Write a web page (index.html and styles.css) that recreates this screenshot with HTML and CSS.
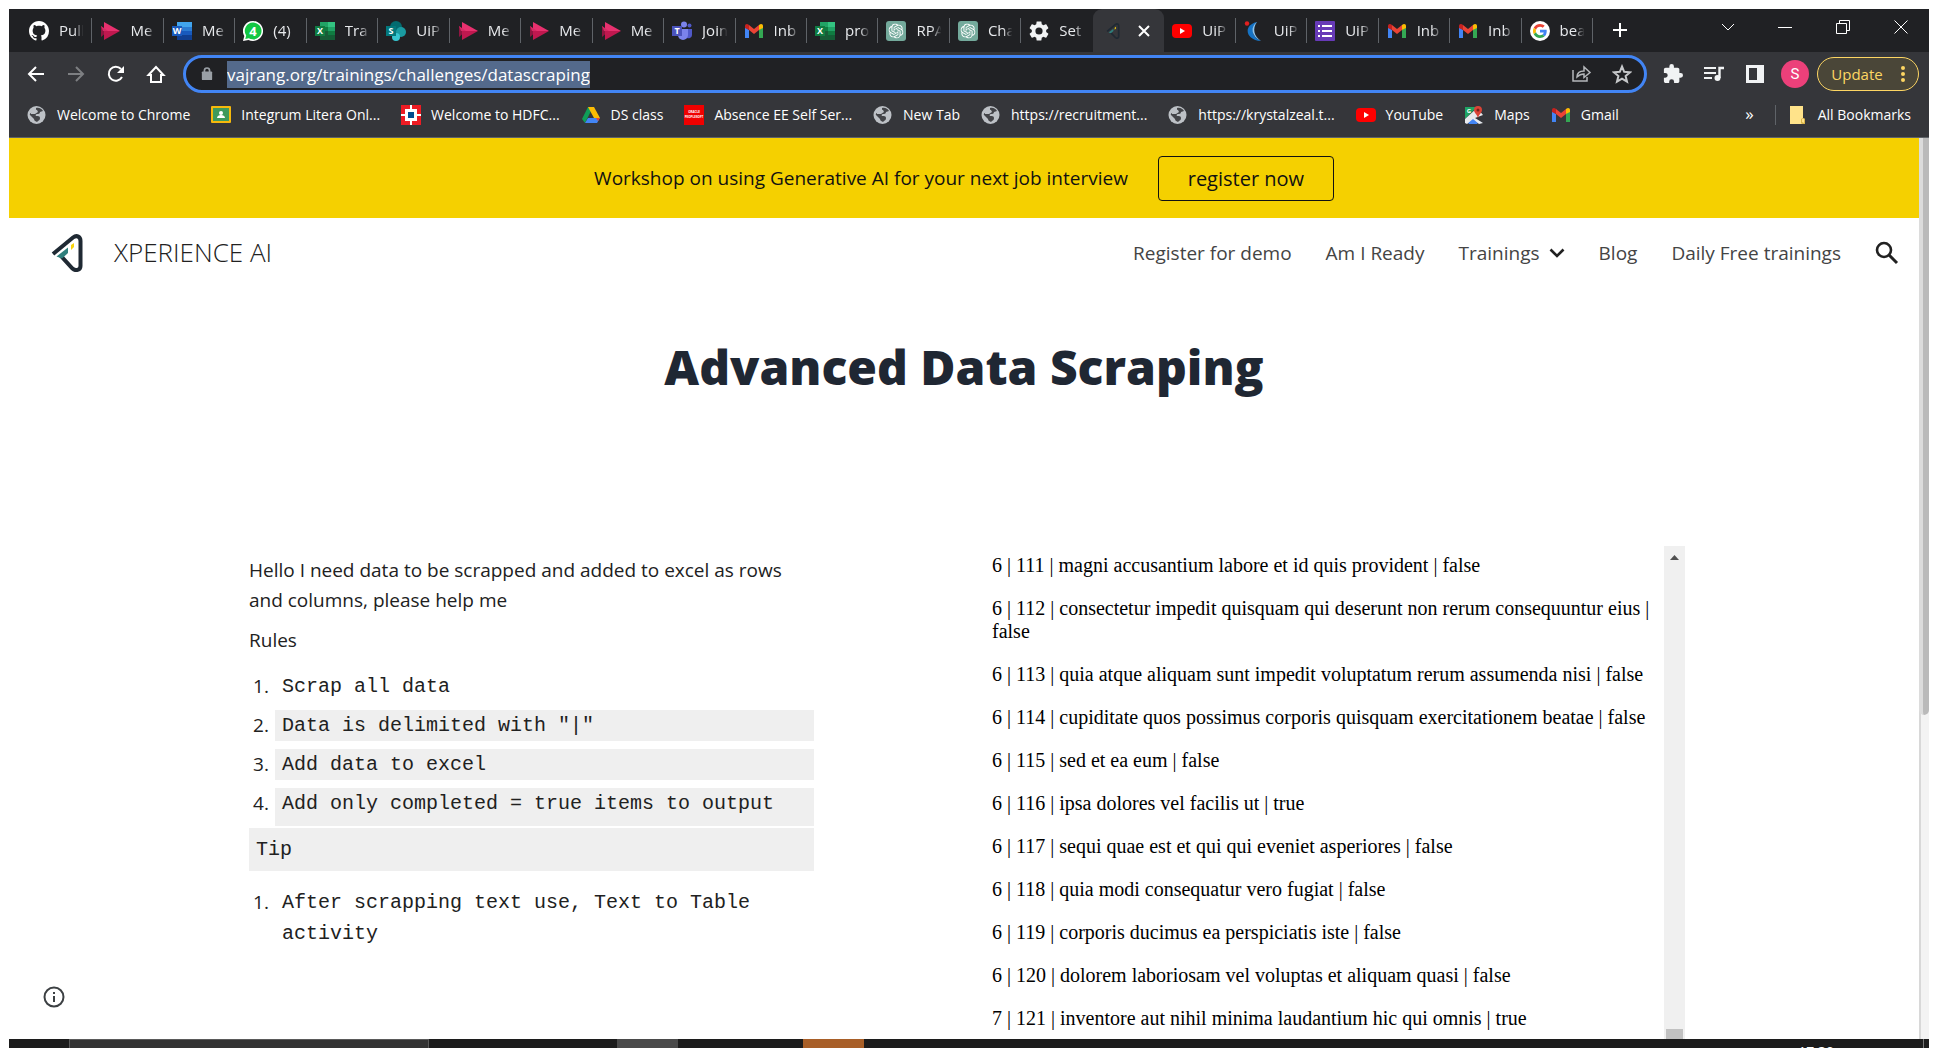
FILE: index.html
```html
<!DOCTYPE html>
<html lang="en">
<head>
<meta charset="utf-8">
<title>Advanced Data Scraping</title>
<link rel="stylesheet" href="styles.css">
</head>
<body>
<svg class="sprite" aria-hidden="true">
  <symbol id="github" viewBox="0 0 16 16"><path fill="#fff" d="M8 0C3.58 0 0 3.58 0 8c0 3.54 2.29 6.53 5.47 7.59.4.07.55-.17.55-.38 0-.19-.01-.82-.01-1.49-2.01.37-2.53-.49-2.69-.94-.09-.23-.48-.94-.82-1.13-.28-.15-.68-.52-.01-.53.63-.01 1.08.58 1.23.82.72 1.21 1.87.87 2.33.66.07-.52.28-.87.51-1.07-1.78-.2-3.64-.89-3.64-3.95 0-.87.31-1.59.82-2.15-.08-.2-.36-1.02.08-2.12 0 0 .67-.21 2.2.82.64-.18 1.32-.27 2-.27.68 0 1.36.09 2 .27 1.53-1.04 2.2-.82 2.2-.82.44 1.1.16 1.92.08 2.12.51.56.82 1.27.82 2.15 0 3.07-1.87 3.75-3.65 3.95.29.25.54.73.54 1.48 0 1.07-.01 1.93-.01 2.2 0 .21.15.46.55.38A8.01 8.01 0 0016 8c0-4.42-3.58-8-8-8z"/></symbol>
  <symbol id="stream" viewBox="0 0 20 20"><path fill="#8f1540" d="M1 5l7 5-7 6z"/><path fill="#e8316f" d="M4 1l16 9H4z"/><path fill="#c0184f" d="M4 19l16-9H4z"/><path fill="#d62b64" d="M1 5l7 5H3z"/></symbol>
  <symbol id="word" viewBox="0 0 20 20"><path fill="#41a5ee" d="M5 1h15v5H5z"/><path fill="#2b7cd3" d="M5 6h15v4H5z"/><path fill="#185abd" d="M5 10h15v4H5z"/><path fill="#103f91" d="M5 14h15v5H5z"/><path fill="#185abd" d="M0 5h10v10H0z"/><text x="5" y="13" class="glyph">W</text></symbol>
  <symbol id="whatsapp" viewBox="0 0 20 20"><path fill="#fff" d="M10 0a10 10 0 11-4.500 18.900L0 20l1.300-5A10 10 0 0110 0z"/><path fill="#12c743" d="M10 1.600a8.400 8.400 0 11-4.200 15.600l-3.500.8.900-3.400A8.400 8.400 0 0110 1.600z"/><text x="10" y="14.500" class="glyph glyph-large">4</text></symbol>
  <symbol id="excel" viewBox="0 0 20 20"><path fill="#21a366" d="M5 1h8v5H5z"/><path fill="#33c481" d="M13 1h7v5h-7z"/><path fill="#107c41" d="M5 6h15v8H5z"/><path fill="#185c37" d="M5 10h8v9H5z"/><path fill="#21a366" d="M13 6h7v4h-7z"/><path fill="#135e36" d="M13 14h7v5h-7z"/><path fill="#107c41" d="M0 5h10v10H0z"/><text x="5" y="13" class="glyph">X</text></symbol>
  <symbol id="sharepoint" viewBox="0 0 20 20"><circle cx="10" cy="6" r="6" fill="#036c70"/><circle cx="15" cy="11" r="5" fill="#1a9ba1"/><circle cx="10" cy="16" r="4" fill="#37c6d0"/><path fill="#03787c" d="M0 5h10v10H0z"/><text x="5" y="13" class="glyph">S</text></symbol>
  <symbol id="teams" viewBox="0 0 20 20"><circle cx="12" cy="3.500" r="3" fill="#7b83eb"/><circle cx="17.500" cy="4.500" r="2" fill="#5059c9"/><path fill="#5059c9" d="M14 8h6v6a3.500 3.500 0 01-5 3z"/><path fill="#7b83eb" d="M6 8h10v6a5 5 0 01-10 0z"/><path fill="#4b53bc" d="M0 5h10v10H0z"/><text x="5" y="13" class="glyph">T</text></symbol>
  <symbol id="gmail" viewBox="0 0 20 20"><path fill="#4285f4" d="M1 17h4V9L1 6z"/><path fill="#34a853" d="M15 17h4V6l-4 3z"/><path fill="#ea4335" d="M5 4l5 4 5-4v5l-5 4-5-4z"/><path fill="#c5221f" d="M1 7V5c0-2 2-3 4-1v5z"/><path fill="#fbbc04" d="M19 7V5c0-2-2-3-4-1v5z"/></symbol>
  <symbol id="gpt" viewBox="0 0 20 20"><rect width="20" height="20" rx="3" fill="#74aa9c"/><svg x="2.500" y="2.500" width="15" height="15" viewBox="0 0 24 24"><path fill="#fff" d="M22.2819 9.8211a5.9847 5.9847 0 0 0-.5157-4.9108 6.0462 6.0462 0 0 0-6.5098-2.9A6.0651 6.0651 0 0 0 4.9807 4.1818a5.9847 5.9847 0 0 0-3.9977 2.9 6.0462 6.0462 0 0 0 .7427 7.0966 5.98 5.98 0 0 0 .511 4.9107 6.051 6.051 0 0 0 6.5146 2.9001A5.9847 5.9847 0 0 0 13.2599 24a6.0557 6.0557 0 0 0 5.7718-4.2058 5.9894 5.9894 0 0 0 3.9977-2.9001 6.0557 6.0557 0 0 0-.7475-7.0729zm-9.022 12.6081a4.4755 4.4755 0 0 1-2.8764-1.0408l.1419-.0804 4.7783-2.7582a.7948.7948 0 0 0 .3927-.6813v-6.7369l2.02 1.1686a.071.071 0 0 1 .038.052v5.5826a4.504 4.504 0 0 1-4.4945 4.4944zm-9.6607-4.1254a4.4708 4.4708 0 0 1-.5346-3.0137l.142.0852 4.783 2.7582a.7712.7712 0 0 0 .7806 0l5.8428-3.3685v2.3324a.0804.0804 0 0 1-.0332.0615L9.74 19.9502a4.4992 4.4992 0 0 1-6.1408-1.6464zM2.3408 7.8956a4.485 4.485 0 0 1 2.3655-1.9728V11.6a.7664.7664 0 0 0 .3879.6765l5.8144 3.3543-2.0201 1.1685a.0757.0757 0 0 1-.071 0l-4.8303-2.7865A4.504 4.504 0 0 1 2.3408 7.872zm16.5963 3.8558L13.1038 8.364 15.1192 7.2a.0757.0757 0 0 1 .071 0l4.8303 2.7913a4.4944 4.4944 0 0 1-.6765 8.1042v-5.6772a.79.79 0 0 0-.407-.667zm2.0107-3.0231l-.142-.0852-4.7735-2.7818a.7759.7759 0 0 0-.7854 0L9.409 9.2297V6.8974a.0662.0662 0 0 1 .0284-.0615l4.8303-2.7866a4.4992 4.4992 0 0 1 6.6802 4.66zM8.3065 12.863l-2.02-1.1638a.0804.0804 0 0 1-.038-.0567V6.0742a4.4992 4.4992 0 0 1 7.3757-3.4537l-.142.0805L8.704 5.459a.7948.7948 0 0 0-.3927.6813zm1.0976-2.3654l2.602-1.4998 2.6069 1.4998v2.9994l-2.5974 1.4997-2.6067-1.4997Z"/></svg></symbol>
  <symbol id="gear" viewBox="2 2 20 20"><path fill="#f1f3f4" d="M19.140 12.940c.04-.3.060-.610.060-.940s-.020-.640-.070-.940l2.030-1.580c.180-.140.230-.410.120-.610l-1.920-3.320c-.120-.220-.370-.290-.590-.220l-2.390.960c-.5-.380-1.030-.7-1.620-.940l-.360-2.540c-.040-.240-.240-.410-.480-.410h-3.840c-.240 0-.430.170-.470.410l-.360 2.540c-.590.240-1.130.570-1.620.940l-2.390-.960c-.220-.080-.470 0-.590.220L2.740 8.870c-.120.210-.080.470.120.610l2.030 1.580c-.050.3-.090.630-.090.940s.020.640.070.940l-2.030 1.580c-.180.140-.230.410-.120.610l1.920 3.320c.120.220.370.290.590.220l2.390-.960c.5.380 1.030.7 1.620.940l.360 2.540c.050.240.240.410.480.410h3.840c.240 0 .440-.170.470-.410l.360-2.540c.590-.240 1.130-.560 1.620-.940l2.390.960c.220.080.470 0 .590-.220l1.920-3.320c.120-.220.070-.470-.120-.610l-2.010-1.580zM12 15.600A3.600 3.600 0 1112 8.400a3.600 3.600 0 010 7.200z"/></symbol>
  <symbol id="xp" viewBox="0 0 32 38"><path fill="none" stroke="#1f2933" stroke-width="4" d="M2 20L22 3.500C26 .5 29.500 3 29.500 7v25c0 4-5 5.500-8 2.500L9 21"/><path fill="#2f7f7c" d="M5.500 22.500L17 13.500V19l-6 5.500z"/><path fill="#f9d40b" d="M20 11l3-2v4l-3 3z"/></symbol>
  <symbol id="youtube" viewBox="0 0 20 20"><rect y="3" width="20" height="14" rx="4" fill="#f00"/><path fill="#fff" d="M8 7l5 3-5 3z"/></symbol>
  <symbol id="krystal" viewBox="0 0 20 20"><path fill="#1673c4" d="M13 1C-1 4 1 19 17 20 8 16 6 8 13 1z"/><path fill="#8ec5ee" d="M13 1C6 6 7 15 17 20 10 15 8 8 13 1z"/><circle cx="3" cy="2.500" r="2.200" fill="#e02020"/></symbol>
  <symbol id="forms" viewBox="0 0 20 20"><rect width="20" height="20" rx="1" fill="#673ab7"/><path fill="#fff" d="M3 4h2v2H3zM3 9h2v2H3zM3 14h2v2H3zM7 4h10v2H7zM7 9h10v2H7zM7 14h10v2H7z"/></symbol>
  <symbol id="google" viewBox="0 0 20 20"><circle cx="10" cy="10" r="10" fill="#fff"/><svg x="3" y="3" width="14" height="14" viewBox="0 0 48 48"><path fill="#EA4335" d="M24 9.500c3.540 0 6.710 1.220 9.210 3.600l6.850-6.850C35.900 2.380 30.470 0 24 0 14.620 0 6.510 5.380 2.560 13.220l7.980 6.190C12.430 13.720 17.740 9.500 24 9.500z"/><path fill="#4285F4" d="M46.980 24.550c0-1.570-.150-3.090-.380-4.550H24v9.020h12.940c-.580 2.960-2.260 5.480-4.780 7.180l7.730 6c4.510-4.180 7.090-10.360 7.090-17.650z"/><path fill="#FBBC05" d="M10.530 28.590c-.480-1.450-.760-2.990-.760-4.590s.270-3.140.760-4.590l-7.980-6.190C.92 16.460 0 20.120 0 24c0 3.880.92 7.540 2.560 10.780l7.970-6.190z"/><path fill="#34A853" d="M24 48c6.480 0 11.930-2.130 15.890-5.810l-7.730-6c-2.150 1.450-4.920 2.300-8.160 2.300-6.260 0-11.570-4.220-13.470-9.910l-7.980 6.190C6.510 42.620 14.620 48 24 48z"/></svg></symbol>
  <symbol id="globe" viewBox="0 0 20 20"><circle cx="9.500" cy="10" r="9" fill="#bdc1c6"/><path fill="#35363a" d="M9 3c3-1 6 1 7 3l-3 1c0 2-2 2-3 2s-2 1-1 2c2 0 4 0 4 2s-1 2-2 3l-1 1c-1-1-3-1-3-3l-4-4C2.500 10 3 8 4 8l5-1z" opacity=".9"/><path fill="#bdc1c6" d="M4 8c2-3 4-4 6-3l1 2-3 2H4z"/></symbol>
  <symbol id="classroom" viewBox="0 0 20 20"><rect y="1" width="20" height="17" rx="1" fill="#f6b90c"/><rect x="2" y="3" width="16" height="13" fill="#3f9a5b"/><circle cx="10" cy="8" r="2" fill="#fff"/><path fill="#fff" d="M6 13c0-4 8-4 8 0z"/></symbol>
  <symbol id="hdfc" viewBox="0 0 20 20"><path fill="#ed1c24" d="M0 0h20v20H0z"/><path fill="#fff" d="M4 4h12v12H4zM9 0h2v4H9zM9 16h2v4H9zM0 9h4v2H0zM16 9h4v2h-4z"/><path fill="#004c8f" d="M7 7h6v6H7z"/></symbol>
  <symbol id="drive" viewBox="0 0 20 20"><path fill="#0f9d58" d="M1 14L7 2h5L4 18z"/><path fill="#fbbc04" d="M7 2h6l6 11h-6z"/><path fill="#4285f4" d="M7 13h12l-3 5H4z"/><path fill="#ea4335" d="M15 13h4l-2 3z"/></symbol>
  <symbol id="oracle" viewBox="0 0 20 20"><path fill="#f00000" d="M0 0h20v20H0z"/><text x="10" y="8" class="glyph glyph-tiny">ORACLE</text><text x="10" y="13" class="glyph glyph-tiny">PEOPLESOFT</text></symbol>
  <symbol id="maps" viewBox="0 0 20 20"><path fill="#1fa463" d="M1 2h12L1 14z"/><path fill="#4285f4" d="M9 12l9 6H3z"/><path fill="#e8eaed" d="M1 14L13 3l6 7-8 3 8 5-4 1-6-5-6 5-2-1z"/><path fill="#4285f4" d="M4 19l5-4 5 4z"/><path fill="#db4437" d="M14 1a4 4 0 014 4c0 3-3 4-4 8-1-4-4-5-4-8a4 4 0 014-4z"/><circle cx="14" cy="5" r="1.500" fill="#7b231b"/><text x="5" y="8" class="glyph glyph-small">G</text></symbol>
  <symbol id="folder" viewBox="0 0 20 20"><path fill="#ffe38a" d="M2 1h13v12l2 1v5H2z"/><path fill="#d9b44a" d="M13 18v-4l2-1 2 1v5h-3z"/><path fill="#ffe38a" d="M14 17v-3h2v4z"/></symbol>
</svg>

<div class="browser">
  <div class="tabstrip">
    <div class="tabs">
      <a class="tab" href="#"><svg class="fav"><use href="#github"/></svg><span>Pull</span></a>
      <a class="tab" href="#"><svg class="fav"><use href="#stream"/></svg><span>Me</span></a>
      <a class="tab" href="#"><svg class="fav"><use href="#word"/></svg><span>Me</span></a>
      <a class="tab" href="#"><svg class="fav"><use href="#whatsapp"/></svg><span>(4)</span></a>
      <a class="tab" href="#"><svg class="fav"><use href="#excel"/></svg><span>Tra</span></a>
      <a class="tab" href="#"><svg class="fav"><use href="#sharepoint"/></svg><span>UiP</span></a>
      <a class="tab" href="#"><svg class="fav"><use href="#stream"/></svg><span>Me</span></a>
      <a class="tab" href="#"><svg class="fav"><use href="#stream"/></svg><span>Me</span></a>
      <a class="tab" href="#"><svg class="fav"><use href="#stream"/></svg><span>Me</span></a>
      <a class="tab" href="#"><svg class="fav"><use href="#teams"/></svg><span>Join</span></a>
      <a class="tab" href="#"><svg class="fav"><use href="#gmail"/></svg><span>Inb</span></a>
      <a class="tab" href="#"><svg class="fav"><use href="#excel"/></svg><span>pro</span></a>
      <a class="tab" href="#"><svg class="fav"><use href="#gpt"/></svg><span>RPA</span></a>
      <a class="tab" href="#"><svg class="fav"><use href="#gpt"/></svg><span>Cha</span></a>
      <a class="tab no-line" href="#"><svg class="fav"><use href="#gear"/></svg><span>Set</span></a>
      <div class="tab active"><svg class="fav mark"><use href="#xp"/></svg><button class="tab-close" aria-label="Close tab"><svg width="12" height="12" viewBox="0 0 12 12"><path d="M1 1l10 10M11 1L1 11" stroke="#fff" stroke-width="2"/></svg></button></div>
      <a class="tab" href="#"><svg class="fav"><use href="#youtube"/></svg><span>UiP</span></a>
      <a class="tab" href="#"><svg class="fav"><use href="#krystal"/></svg><span>UiP</span></a>
      <a class="tab" href="#"><svg class="fav"><use href="#forms"/></svg><span>UiP</span></a>
      <a class="tab" href="#"><svg class="fav"><use href="#gmail"/></svg><span>Inb</span></a>
      <a class="tab" href="#"><svg class="fav"><use href="#gmail"/></svg><span>Inb</span></a>
      <a class="tab" href="#"><svg class="fav"><use href="#google"/></svg><span>bea</span></a>
    </div>
    <div class="window-controls">
      <button class="new-tab" aria-label="New tab"><svg width="16" height="16" viewBox="0 0 16 16"><path d="M8 1v14M1 8h14" stroke="#fff" stroke-width="2"/></svg></button>
      <button aria-label="Search tabs"><svg width="14" height="14" viewBox="0 0 14 14"><path d="M1 4l6 6 6-6"/></svg></button>
      <button aria-label="Minimize"><svg width="14" height="14" viewBox="0 0 14 14"><path d="M0 7.500h14"/></svg></button>
      <button aria-label="Restore"><svg width="14" height="14" viewBox="0 0 14 14"><path d="M.5 3.500h10v10H.5zM3.500 3V.5h10v10h-3"/></svg></button>
      <button aria-label="Close"><svg width="14" height="14" viewBox="0 0 14 14"><path d="M.5.500l13 13M13.500.500l-13 13"/></svg></button>
    </div>
  </div>

  <div class="toolbar">
    <button class="tool" aria-label="Back"><svg width="20" height="20" viewBox="0 0 20 20"><path d="M18 10H3M10 3l-7 7 7 7" fill="none" stroke="#fff" stroke-width="2"/></svg></button>
    <button class="tool" aria-label="Forward"><svg width="20" height="20" viewBox="0 0 20 20"><path d="M2 10h15M10 3l7 7-7 7" fill="none" stroke="#7d7f82" stroke-width="2"/></svg></button>
    <button class="tool" aria-label="Reload"><svg width="20" height="20" viewBox="0 0 20 20"><path d="M16 13a7 7 0 11-1-8" fill="none" stroke="#fff" stroke-width="2"/><path d="M18 2v7h-7z" fill="#fff"/></svg></button>
    <button class="tool" aria-label="Home"><svg width="20" height="20" viewBox="0 0 20 20"><path d="M2.500 11L10 3l7.500 8H15v7H5v-7z" fill="none" stroke="#fff" stroke-width="2"/></svg></button>
    <div class="omnibox">
      <svg class="lock" width="12" height="16" viewBox="0 0 14 16"><rect x="1" y="5" width="12" height="10" rx="1" fill="#9aa0a6"/><path d="M4 6V4a3 3 0 016 0v2" fill="none" stroke="#9aa0a6" stroke-width="2"/></svg>
      <input class="url" aria-label="Address" value="vajrang.org/trainings/challenges/datascraping">
      <button class="omni-tool" aria-label="Share"><svg width="20" height="20" viewBox="0 0 20 20"><path d="M1 6v11h14v-4M5 13c0-4 3-6 7-6V3l6 5.500-6 5V10c-3 0-5 1-7 3z" fill="none" stroke="#b4b7ba" stroke-width="1.500"/></svg></button>
      <button class="omni-tool" aria-label="Bookmark"><svg width="20" height="20" viewBox="0 0 20 20"><path d="M10 2.500l2.200 5.300 5.800.5-4.400 3.800 1.400 5.600-5-3-5 3 1.400-5.600L2 8.300l5.800-.5z" fill="none" stroke="#c6c8ca" stroke-width="2"/></svg></button>
    </div>
    <button class="tool" aria-label="Extensions"><svg width="20" height="20" viewBox="1 1 22 22"><path fill="#f1f3f4" d="M20.500 11H19V7c0-1.100-.9-2-2-2h-4V3.500a2.500 2.500 0 00-5 0V5H4c-1.100 0-2 .9-2 2v3.800h1.500a2.700 2.700 0 010 5.400H2V20c0 1.100.9 2 2 2h3.800v-1.500a2.700 2.700 0 015.400 0V22H17c1.100 0 2-.9 2-2v-4h1.500a2.500 2.500 0 000-5z"/></svg></button>
    <button class="tool" aria-label="Media controls"><svg width="22" height="20" viewBox="0 0 22 20"><path d="M1 4h12M1 9h12M1 14h8" stroke="#f1f3f4" stroke-width="2"/><circle cx="14.500" cy="14" r="3" fill="#f1f3f4"/><path d="M16.500 14V4H21" fill="none" stroke="#f1f3f4" stroke-width="2.400"/></svg></button>
    <button class="tool" aria-label="Side panel"><svg width="18" height="18" viewBox="0 0 18 18"><path fill="#f1f3f4" fill-rule="evenodd" d="M0 0h18v18H0zM3 3v12h8V3z"/></svg></button>
    <button class="avatar">S</button>
    <button class="update">Update<svg width="4" height="16" viewBox="0 0 4 16"><g fill="#fdd663"><circle cx="2" cy="2" r="2"/><circle cx="2" cy="8" r="2"/><circle cx="2" cy="14" r="2"/></g></svg></button>
  </div>

  <div class="bookmarks">
    <a href="#"><svg class="fav"><use href="#globe"/></svg>Welcome to Chrome</a>
    <a href="#"><svg class="fav"><use href="#classroom"/></svg>Integrum Litera Onl...</a>
    <a href="#"><svg class="fav"><use href="#hdfc"/></svg>Welcome to HDFC...</a>
    <a href="#"><svg class="fav"><use href="#drive"/></svg>DS class</a>
    <a href="#"><svg class="fav"><use href="#oracle"/></svg>Absence EE Self Ser...</a>
    <a href="#"><svg class="fav"><use href="#globe"/></svg>New Tab</a>
    <a href="#"><svg class="fav"><use href="#globe"/></svg>https://recruitment...</a>
    <a href="#"><svg class="fav"><use href="#globe"/></svg>https://krystalzeal.t...</a>
    <a href="#"><svg class="fav"><use href="#youtube"/></svg>YouTube</a>
    <a href="#"><svg class="fav"><use href="#maps"/></svg>Maps</a>
    <a href="#"><svg class="fav"><use href="#gmail"/></svg>Gmail</a>
    <button class="more">»</button>
    <a class="all" href="#"><svg class="fav"><use href="#folder"/></svg>All Bookmarks</a>
  </div>

  <div class="viewport">
    <div class="page">
      <div class="banner">
        <span>Workshop on using Generative AI for your next job interview</span>
        <a class="register" href="#">register now</a>
      </div>
      <header class="site-header">
        <svg class="logo" width="32" height="38"><use href="#xp"/></svg>
        <a class="brand" href="#">XPERIENCE AI</a>
        <nav>
          <a href="#">Register for demo</a>
          <a href="#">Am I Ready</a>
          <a href="#">Trainings<svg width="16" height="10" viewBox="0 0 16 10"><path d="M1.500 1.500L8 8l6.500-6.500" fill="none" stroke="#212121" stroke-width="2.600"/></svg></a>
          <a href="#">Blog</a>
          <a href="#">Daily Free trainings</a>
          <button class="search" aria-label="Search"><svg width="24" height="24" viewBox="0 0 24 24"><circle cx="9" cy="9" r="7" fill="none" stroke="#212121" stroke-width="2.600"/><path d="M14 14l8 8" stroke="#212121" stroke-width="3"/></svg></button>
        </nav>
      </header>
      <h1>Advanced Data Scraping</h1>
      <main class="content">
        <section class="brief">
          <p>Hello I need data to be scrapped and added to excel as rows and columns, please help me</p>
          <p>Rules</p>
          <ol>
            <li><code class="plain">Scrap all data</code></li>
            <li><code>Data is delimited with "|"</code></li>
            <li><code>Add data to excel</code></li>
            <li><code class="last">Add only completed = true items to output</code></li>
          </ol>
          <p class="tip">Tip</p>
          <ol>
            <li><code class="plain">After scrapping text use, Text to Table activity</code></li>
          </ol>
        </section>
        <section class="frame">
          <div class="rows">
            <p>6 | 111 | magni accusantium labore et id quis provident | false</p>
            <p>6 | 112 | consectetur impedit quisquam qui deserunt non rerum consequuntur eius | false</p>
            <p>6 | 113 | quia atque aliquam sunt impedit voluptatum rerum assumenda nisi | false</p>
            <p>6 | 114 | cupiditate quos possimus corporis quisquam exercitationem beatae | false</p>
            <p>6 | 115 | sed et ea eum | false</p>
            <p>6 | 116 | ipsa dolores vel facilis ut | true</p>
            <p>6 | 117 | sequi quae est et qui qui eveniet asperiores | false</p>
            <p>6 | 118 | quia modi consequatur vero fugiat | false</p>
            <p>6 | 119 | corporis ducimus ea perspiciatis iste | false</p>
            <p>6 | 120 | dolorem laboriosam vel voluptas et aliquam quasi | false</p>
            <p>7 | 121 | inventore aut nihil minima laudantium hic qui omnis | true</p>
          </div>
          <div class="frame-scroll">
            <svg width="9" height="5" viewBox="0 0 9 5"><path fill="#505050" d="M0 5l4.500-5L9 5z"/></svg>
            <div class="frame-thumb"></div>
          </div>
        </section>
      </main>
      <button class="info" aria-label="Site information"><svg width="22" height="22" viewBox="0 0 22 22"><circle cx="11" cy="11" r="9.500" fill="none" stroke="#3c4043" stroke-width="2"/><path d="M11 10v6M11 6v2" stroke="#3c4043" stroke-width="2"/></svg></button>
    </div>
    <div class="page-scroll"><div class="page-thumb"></div></div>
  </div>

  <div class="taskbar">
    <div class="task-search"></div>
    <div class="task-item grey"></div>
    <div class="task-item orange"></div>
    <span class="clock">17:30</span>
    <div class="peek"></div>
  </div>
</div>
</body>
</html>
```

FILE: styles.css
```css
* { box-sizing: border-box; }

body {
  margin: 0;
  background: #fff;
  font-family: "Open Sans", "Noto Sans", sans-serif;
}

a { color: inherit; text-decoration: none; }

button {
  display: flex;
  align-items: center;
  justify-content: center;
  padding: 0;
  border: 0;
  background: none;
  color: inherit;
  font: inherit;
}

.sprite { display: none; }

.glyph {
  fill: #fff;
  font: 700 9px "Open Sans", sans-serif;
  text-anchor: middle;
}
.glyph-large { font-size: 13px; }
.glyph-small { font-size: 6px; }
.glyph-tiny { font-size: 3px; }

.browser {
  display: flex;
  flex-direction: column;
  height: 100vh;
  padding: 9px 9px 0;
  overflow: hidden;
}

/* Tab strip */
.tabstrip {
  display: flex;
  flex: none;
  height: 43px;
  padding-left: 12px;
  background: #202124;
  color: #e8eaed;
  font-size: 15px;
}
.tabs {
  display: grid;
  flex: 1;
  grid-template-columns: repeat(22, minmax(0, 1fr));
  min-width: 0;
}
.tab {
  display: flex;
  align-items: center;
  min-width: 0;
  padding: 0 8px;
  gap: 10px;
  background: linear-gradient(#5f6368, #5f6368) right 9px / 1px 25px no-repeat;
}
.tab > span {
  flex: 1;
  min-width: 0;
  padding-bottom: 2px;
  overflow: hidden;
  white-space: nowrap;
  mask-image: linear-gradient(90deg, #000 60%, transparent 98%);
}
.no-line { background: none; }
.tab.active {
  justify-content: space-between;
  padding: 0 14px 0 10px;
  border-radius: 9px 9px 0 0;
  background: #35363a;
}
.fav { flex: none; width: 20px; height: 20px; }
.mark { height: 16px; }
.window-controls {
  display: grid;
  flex: none;
  grid-template-columns: 54px 109px repeat(3, 58px);
  width: 336px;
  padding-bottom: 7px;
}
.window-controls path { fill: none; stroke: #fff; stroke-width: 1; }
.window-controls button:nth-child(2) { justify-content: flex-end; padding-right: 21px; }
.window-controls .new-tab { padding-top: 6px; }
.window-controls .new-tab path { stroke-width: 2; }

/* Toolbar */
.toolbar {
  display: flex;
  flex: none;
  align-items: center;
  height: 44px;
  padding: 0 10px 0 17px;
  gap: 20px;
  background: #35363a;
}
.tool { flex: none; min-width: 20px; height: 28px; }
.omnibox {
  display: flex;
  flex: 1;
  align-items: center;
  min-width: 0;
  height: 38px;
  margin: 0 -4px 0 -3px;
  padding: 0 12px 0 15px;
  gap: 20px;
  border: 3px solid #4285f4;
  border-radius: 19px;
  background: #202124;
}
.lock { flex: none; margin-right: -6px; }
.url {
  field-sizing: content;
  height: 27px;
  margin-right: auto;
  padding: 0;
  border: 0;
  background: #546a8c;
  color: #fff;
  font: 17px "Open Sans", "Noto Sans", sans-serif;
}
.avatar {
  flex: none;
  width: 28px;
  height: 28px;
  margin-left: -4px;
  margin-right: -12px;
  border-radius: 50%;
  background: #ec407a;
  color: #fff;
  font: 15px Roboto, sans-serif;
}
.update {
  flex: none;
  width: 102px;
  height: 34px;
  gap: 18px;
  border: 1px solid #fdd663;
  border-radius: 17px;
  background: #4a4638;
  color: #fdd663;
  font-size: 15px;
}

/* Bookmarks bar */
.bookmarks {
  display: flex;
  flex: none;
  align-items: center;
  height: 42px;
  padding: 0 18px 4px;
  gap: 21px;
  border-bottom: 1px solid #5f6368;
  background: #35363a;
  color: #fff;
  font-size: 14px;
  white-space: nowrap;
}
.bookmarks a { display: flex; align-items: center; gap: 10px; }
.more { margin-left: auto; padding-bottom: 2px; font-size: 17px; }
.bookmarks .all { padding-left: 12px; border-left: 1px solid #5f6368; }

/* Page */
.viewport { display: flex; flex: 1; min-height: 0; overflow: hidden; }
.page {
  position: relative;
  flex: 1;
  min-width: 0;
  overflow: hidden;
  color: #212121;
  font-size: 19px;
}
.banner {
  display: flex;
  align-items: center;
  justify-content: center;
  height: 80px;
  gap: 30px;
  background: #f5d000;
  color: #111;
}
.register {
  display: grid;
  place-items: center;
  width: 176px;
  height: 45px;
  border: 1px solid #111;
  border-radius: 4px;
  font-size: 20px;
}
.site-header {
  display: flex;
  align-items: center;
  height: 70px;
  padding: 0 20px 0 42px;
}
.brand { margin-left: 31px; padding-bottom: 2px; font-size: 26px; font-weight: 300; }
nav {
  display: flex;
  align-items: center;
  margin-left: auto;
  gap: 34px;
  color: #444;
}
nav a { display: flex; align-items: center; gap: 9px; }
h1 {
  margin: 49px 0 149px;
  color: #1f2733;
  font-size: 48px;
  font-weight: 800;
  line-height: 60px;
  text-align: center;
}
.content {
  display: grid;
  grid-template-columns: 565fr 708fr;
  padding: 0 234px 0 240px;
  column-gap: 163px;
}
.brief { padding-top: 9px; line-height: 30px; }
.brief p { margin: 0 0 10px; }
.brief ol {
  margin: 16px 0 0;
  padding: 0;
  counter-reset: step;
  list-style: none;
}
.brief li {
  display: grid;
  grid-template-columns: 26px 1fr;
  margin-bottom: 8px;
  counter-increment: step;
  line-height: 31px;
}
.brief li::before { content: counter(step) "."; padding-left: 4px; }
code, .tip { font: 20px/31px "Liberation Mono", monospace; }
code { padding-left: 7px; background: #efefef; }
code.plain { background: none; }
code.last { padding-bottom: 7px; }
.brief li:has(.last) { margin-bottom: 2px; }
.brief .tip { margin: 0; padding: 6px 7px; background: #efefef; }

.frame { display: grid; grid-template-columns: 1fr 21px; }
.rows {
  padding: 8px 10px 20px 15px;
  color: #000;
  font: 20px/23px "Liberation Serif", serif;
}
.rows p { margin: 0 0 20px; }
.rows p:last-child { margin: 0; }
.frame-scroll {
  display: flex;
  flex-direction: column;
  align-items: center;
  padding-top: 9px;
  background: #f0f0f0;
}
.frame-thumb { width: 17px; height: 21px; margin-top: auto; background: #c1c1c1; }

.info { position: absolute; left: 34px; bottom: 31px; }

.page-scroll {
  flex: none;
  width: 10px;
  border-left: 2px solid #d8d8d8;
  background: #f3f3f3;
}
.page-thumb {
  height: 64%;
  margin-left: -2px;
  border-left: 4px solid #dcdcdc;
  border-radius: 0 0 5px 5px;
  background: #bababa;
}

/* Taskbar */
.taskbar {
  display: flex;
  flex: none;
  align-items: flex-start;
  height: 9px;
  overflow: hidden;
  background: #1c1c1c;
  color: #fff;
}
.task-search {
  width: 360px;
  height: 9px;
  margin-left: 60px;
  border: 1px solid #5a5a5a;
  border-bottom: 0;
  background: #333;
}
.task-item { width: 61px; height: 9px; }
.grey { margin-left: 188px; background: #4a4a4a; }
.orange { margin-left: 125px; background: #a85f28; }
.clock { margin: 4px 89px 0 auto; font-size: 14px; line-height: 18px; }
.peek { width: 6px; height: 9px; border-left: 1px solid #777; }
```
